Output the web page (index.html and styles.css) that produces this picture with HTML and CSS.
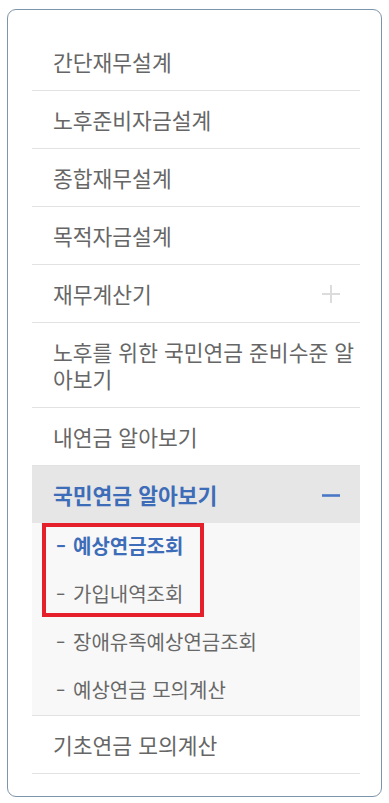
FILE: index.html
```html
<!DOCTYPE html>
<html lang="ko">
<head>
<meta charset="utf-8">
<title>메뉴</title>
<link rel="stylesheet" href="styles.css">
</head>
<body>
<div class="wrap">
  <nav class="menu">
    <ul class="menu-list">
      <li class="menu-item"><a class="menu-link" href="#">간단재무설계</a></li>
      <li class="menu-item"><a class="menu-link" href="#">노후준비자금설계</a></li>
      <li class="menu-item"><a class="menu-link" href="#">종합재무설계</a></li>
      <li class="menu-item"><a class="menu-link" href="#">목적자금설계</a></li>
      <li class="menu-item"><a class="menu-link" href="#"><span class="label">재무계산기</span><svg class="icon" width="18" height="18" viewBox="0 0 18 18"><path d="M9 0v18M0 9h18" stroke="#dcdcdc" stroke-width="2" fill="none"/></svg></a></li>
      <li class="menu-item"><a class="menu-link" href="#">노후를 위한 국민연금 준비수준 알아보기</a></li>
      <li class="menu-item"><a class="menu-link" href="#">내연금 알아보기</a></li>
      <li class="menu-item active">
        <a class="menu-link" href="#"><span class="label">국민연금 알아보기</span><svg class="icon" width="18" height="18" viewBox="0 0 18 18"><path d="M0 9.5h18" stroke="#4a78c6" stroke-width="2.6" fill="none"/></svg></a>
        <ul class="sub">
          <li class="sub-item current"><a class="sub-link" href="#"><span class="dash">-</span>예상연금조회</a></li>
          <li class="sub-item"><a class="sub-link" href="#"><span class="dash">-</span>가입내역조회</a></li>
          <li class="sub-item"><a class="sub-link" href="#"><span class="dash">-</span>장애유족예상연금조회</a></li>
          <li class="sub-item"><a class="sub-link" href="#"><span class="dash">-</span>예상연금 모의계산</a></li>
          <span class="highlight"></span>
        </ul>
      </li>
      <li class="menu-item"><a class="menu-link" href="#">기초연금 모의계산</a></li>
    </ul>
  </nav>
</div>
</body>
</html>
```
FILE: styles.css
```css
html, body {
  margin: 0;
  padding: 0;
  background: #ffffff;
}
body {
  font-family: "Noto Sans CJK KR", "Noto Sans", sans-serif;
}
.wrap {
  padding: 9px 7px 6px 7px;
}
.menu {
  border: 1px solid #7d95aa;
  border-radius: 9px;
  padding: 23px 21px 22px 24px;
  background: #ffffff;
}
.menu-list, .sub {
  list-style: none;
  margin: 0;
  padding: 0;
}
.menu-item {
  border-bottom: 1px solid #e2e2e2;
}
.menu-link {
  display: flex;
  align-items: center;
  justify-content: space-between;
  padding: 15px 0 15px 21px;
  font-size: 21.5px;
  line-height: 27px;
  color: #666666;
  text-decoration: none;
}
.menu-link .icon {
  flex: none;
  margin-right: 20px;
}
.active .menu-link {
  background: #e6e6e6;
  color: #3d6db8;
  font-weight: 700;
}
.sub {
  position: relative;
  background: #f8f8f8;
}
.sub-link {
  display: block;
  padding: 9px 0 11px 21px;
  font-size: 20px;
  line-height: 28px;
  color: #686868;
  text-decoration: none;
}
.dash {
  display: inline-block;
  width: 20px;
  transform: scaleX(1.4);
  transform-origin: left center;
  padding-left: 2px;
  box-sizing: border-box;
}
.current .sub-link {
  color: #3d6db8;
  font-weight: 700;
}
.highlight {
  position: absolute;
  left: 10px;
  top: 0;
  width: 162px;
  height: 94px;
  box-sizing: border-box;
  border: 4px solid #e5202a;
  pointer-events: none;
}
```
